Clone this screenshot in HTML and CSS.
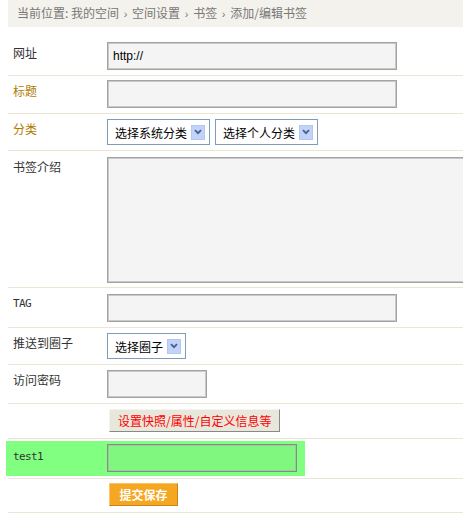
FILE: index.html
```html
<!DOCTYPE html>
<html lang="zh-CN">
<head>
<meta charset="utf-8">
<title>添加/编辑书签</title>
<link rel="stylesheet" href="styles.css">
</head>
<body>
<div class="crumbs">当前位置: 我的空间 <span class="sep">›</span> 空间设置 <span class="sep">›</span> 书签 <span class="sep">›</span> 添加/编辑书签</div>

<form class="form">
  <div class="row">
    <div class="label">网址</div>
    <div class="field"><input class="text wide" type="text" value="http://"></div>
  </div>
  <div class="row">
    <div class="label gold">标题</div>
    <div class="field"><input class="text wide" type="text"></div>
  </div>
  <div class="row select-row">
    <div class="label gold">分类</div>
    <div class="field selects">
      <div class="select"><span>选择系统分类</span><span class="arrow"><svg width="8" height="6" viewBox="0 0 8 6"><path d="M1 1.2 4 4.2 7 1.2" fill="none" stroke="#4a5f86" stroke-width="1.8"/></svg></span></div>
      <div class="select"><span>选择个人分类</span><span class="arrow"><svg width="8" height="6" viewBox="0 0 8 6"><path d="M1 1.2 4 4.2 7 1.2" fill="none" stroke="#4a5f86" stroke-width="1.8"/></svg></span></div>
    </div>
  </div>
  <div class="row area-row">
    <div class="label">书签介绍</div>
    <div class="field"><textarea class="text area"></textarea></div>
  </div>
  <div class="row tag-row">
    <div class="label latin">TAG</div>
    <div class="field"><input class="text wide" type="text"></div>
  </div>
  <div class="row select-row">
    <div class="label">推送到圈子</div>
    <div class="field selects">
      <div class="select"><span>选择圈子</span><span class="arrow"><svg width="8" height="6" viewBox="0 0 8 6"><path d="M1 1.2 4 4.2 7 1.2" fill="none" stroke="#4a5f86" stroke-width="1.8"/></svg></span></div>
    </div>
  </div>
  <div class="row pwd-row">
    <div class="label">访问密码</div>
    <div class="field"><input class="text short" type="password"></div>
  </div>
  <div class="row btn-row">
    <div class="label"></div>
    <div class="field"><button type="button" class="btn-extra">设置快照/属性/自定义信息等</button></div>
  </div>
  <div class="row hl-row">
    <div class="hl">
      <div class="label latin">test1</div>
      <div class="field"><input class="text green" type="text"></div>
    </div>
  </div>
  <div class="row submit-row">
    <div class="label"></div>
    <div class="field"><button type="button" class="btn-save">提交保存</button></div>
  </div>
</form>
</body>
</html>
```

FILE: styles.css
```css
html, body {
  margin: 0;
  padding: 0;
  background: #fff;
  overflow: hidden;
}

body {
  padding-left: 8px;
  font-family: "Noto Sans CJK SC", "Liberation Sans", sans-serif;
  font-size: 12px;
  color: #333;
}

.crumbs {
  height: 27px;
  line-height: 26px;
  padding-left: 9px;
  background: #f4f2ec;
  color: #777;
  font-size: 12px;
  white-space: nowrap;
}

.crumbs .sep {
  font-family: "Liberation Sans", sans-serif;
  font-size: 11px;
  margin: 0 2px;
}

.form {
  margin: 11px 0 0;
  width: 455px;
}

/* each form line: label column + field column, separated by a beige rule */
.row {
  display: flex;
  align-items: flex-start;
  padding: 4px 0 5px;
  border-bottom: 1px solid #ebe6d3;
}

.select-row { padding: 5px 0 5px; }
.area-row   { padding: 5px 0 4px; }
.tag-row    { padding: 6px 0 5px; }
.pwd-row    { padding: 5px 0 5px; }
.btn-row    { padding: 5px 0 6px; }
.hl-row     { padding: 2px 0 2px; }
.submit-row { padding: 4px 0 6px; }

.label {
  width: 94px;
  flex: none;
  padding-left: 5px;
  margin-top: 2px;
  line-height: 18px;
  color: #333;
}

.select-row .label,
.pwd-row .label,
.tag-row .label { margin-top: 1px; }

.label.gold {
  color: #b07b00;
}

.label.latin {
  font-family: "DejaVu Sans Mono", monospace;
  font-size: 11px;
  letter-spacing: -0.6px;
}

.field {
  flex: 1;
  min-width: 0;
}

.text {
  display: block;
  box-sizing: border-box;
  margin: 0;
  height: 28px;
  border: 1px solid #a2a2a2;
  box-shadow: inset 1px 1px 0 #c9c9c9, inset -1px -1px 0 #c9c9c9;
  background: #f4f4f4;
  padding: 0 5px;
  font-family: "Liberation Sans", sans-serif;
  font-size: 12px;
  color: #000;
  outline: none;
}

.wide { width: 290px; }
.short { width: 100px; }

.area {
  width: 400px;
  height: 126px;
  margin-top: 1px;
  resize: none;
}

.selects {
  display: flex;
  gap: 5px;
}

.select {
  box-sizing: border-box;
  height: 26px;
  display: flex;
  align-items: center;
  gap: 4px;
  padding: 0 4px 0 7px;
  border: 1px solid #7f9db9;
  background: #fff;
  color: #000;
  white-space: nowrap;
}

.arrow {
  box-sizing: border-box;
  width: 14px;
  height: 15px;
  display: flex;
  align-items: center;
  justify-content: center;
  background: #c1d3fb;
  border: 1px solid #b4c7f0;
}

.btn-extra {
  display: block;
  box-sizing: border-box;
  margin: 0 0 0 2px;
  height: 23px;
  padding: 0 8px;
  background: #e8e7dc;
  border: 1px solid;
  border-color: #f4f4ee #8a8a84 #8a8a84 #f4f4ee;
  color: #f00;
  font-family: "Noto Sans CJK SC", sans-serif;
  font-size: 12px;
  line-height: 21px;
}

/* highlighted custom-field line */
.hl {
  display: flex;
  align-items: flex-start;
  margin-left: -2px;
  width: 297px;
  padding: 3px 0 4px 2px;
  background: #80ff80;
}

.hl .field {
  flex: none;
}

.hl .label {
  margin-top: 4px;
}

.green {
  width: 190px;
  background: #80f880;
  border: 1px solid #8a8a8a;
  box-shadow: inset 1px 1px 0 #9dc89d, inset -1px -1px 0 #9dc89d;
}

.btn-save {
  display: block;
  box-sizing: border-box;
  margin: 0 0 0 2px;
  height: 23px;
  width: 69px;
  padding: 0;
  background: #f6a722;
  border: 1px solid;
  border-color: #fbc36a #c8861a #c8861a #fbc36a;
  color: #fff;
  font-family: "Noto Sans CJK SC", sans-serif;
  font-weight: bold;
  font-size: 12px;
  line-height: 21px;
}
```
